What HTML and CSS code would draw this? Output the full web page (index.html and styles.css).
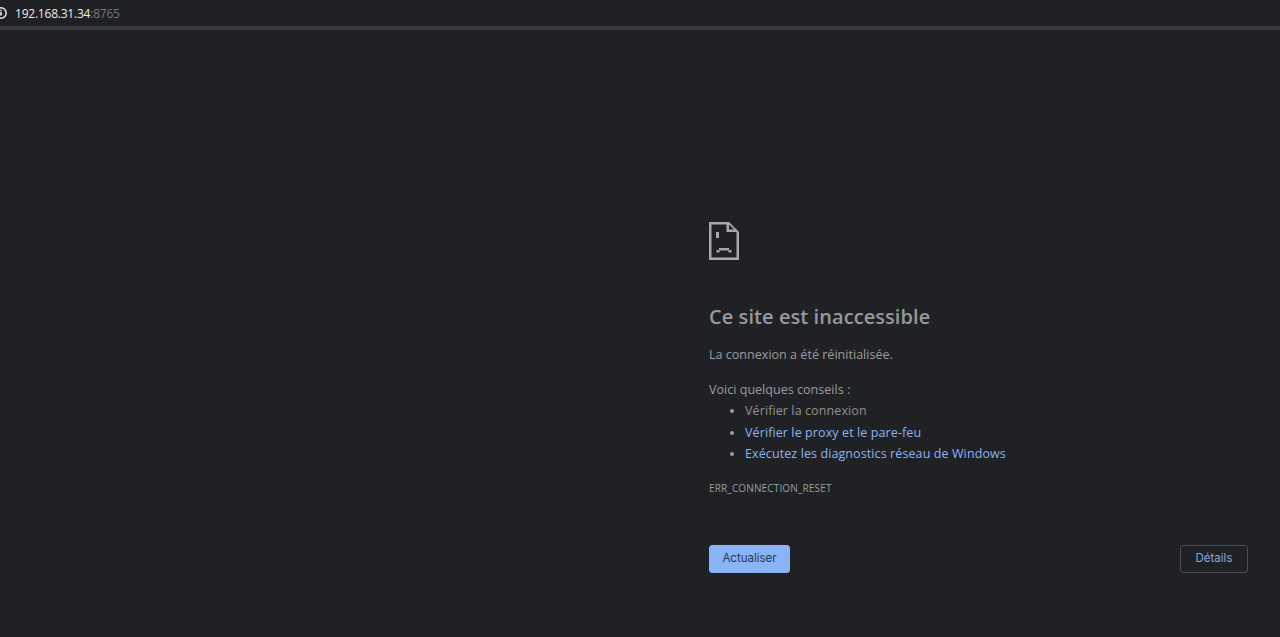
FILE: index.html
```
<!DOCTYPE html>
<html lang="fr">
<head>
<meta charset="utf-8">
<title>192.168.31.34</title>
<link rel="stylesheet" href="styles.css">
</head>
<body>
<header class="bar">
  <svg class="info" width="15" height="16" viewBox="0 0 15 16"><circle cx="1" cy="8" r="5.2" fill="none" stroke="#e8eaed" stroke-width="1.5"/><rect x="0.2" y="7" width="1.6" height="3.6" fill="#e8eaed"/><rect x="0.2" y="4.8" width="1.6" height="1.4" fill="#e8eaed"/></svg>
  <span class="host">192.168.31.34</span><span class="port">:8765</span>
</header>
<main class="page">
  <svg class="sad" width="30" height="38" viewBox="0 0 30 38" fill="#a6a8ab">
    <path d="M0 0H20V2.5H2.5V35.5H27.5V10H30V38H0Z"/>
    <path d="M17.5 0H20V7.5H27.5V10H17.5Z"/>
    <path d="M20 0L30 10H27.5L20 2.5Z"/>
    <rect x="7" y="10" width="3" height="6"/>
    <rect x="10" y="26" width="10" height="2.5"/><rect x="7.5" y="28" width="3" height="2.5"/><rect x="19.5" y="28" width="3" height="2.5"/>
  </svg>
  <h1 class="title">Ce site est inaccessible</h1>
  <p class="line">La connexion a été réinitialisée.</p>
  <p class="tips">Voici quelques conseils :</p>
  <ul class="list">
    <li>Vérifier la connexion</li>
    <li class="link">Vérifier le proxy et le pare-feu</li>
    <li class="link">Exécutez les diagnostics réseau de Windows</li>
  </ul>
  <div class="code">ERR_CONNECTION_RESET</div>
  <div class="actions">
    <button class="btn primary">Actualiser</button>
    <button class="btn ghost">Détails</button>
  </div>
</main>
</body>
</html>
```
FILE: styles.css
```
* { box-sizing: border-box; }
html, body { margin: 0; height: 100%; }
body {
  background: #202124;
  color: #9aa0a6;
  font-family: "Open Sans", "Noto Sans", sans-serif;
  overflow: hidden;
}
.bar {
  height: 30px;
  border-bottom: 4px solid #36383b;
  background: #1f2023;
  display: flex;
  align-items: center;
  font-size: 12px;
  letter-spacing: -0.22px;
}
.info { flex: none; }
.host { color: #eceef0; }
.port { color: #74777b; }
.page {
  padding: 192px 32px 0 709px;
}
.sad { display: block; }
.title {
  margin: 42px 0 0;
  font-size: 20px;
  line-height: 30px;
  font-weight: 600;
  color: #97999d;
  letter-spacing: 0.07px;
}
.line, .tips {
  font-size: 12.5px;
  line-height: 21px;
  color: #9b9da0;
  letter-spacing: 0.03px;
}
.line { margin: 12px 0 0; }
.tips { margin: 14px 0 0; }
.list {
  margin: 0;
  padding: 0 0 0 36px;
  font-size: 12.5px;
  line-height: 21.5px;
  letter-spacing: 0.1px;
  color: #8f9195;
}
.link { color: #8ab4f8; }
li::marker { color: #9b9da0; }
.code {
  margin-top: 16px;
  font-size: 10px;
  line-height: 14px;
  color: #9b9da0;
  letter-spacing: 0.15px;
}
.actions {
  margin-top: 50px;
  display: flex;
  justify-content: space-between;
}
.btn {
  height: 28px;
  border-radius: 3px;
  font: 400 11.5px/1 "Inter", "Roboto", sans-serif;
  padding: 0;
}
.primary {
  width: 81px;
  background: #8ab4f8;
  border: 1px solid #8ab4f8;
  color: #2a3650;
}
.ghost {
  width: 68px;
  background: transparent;
  border: 1px solid #4a4c50;
  color: #86a8e0;
}
```
